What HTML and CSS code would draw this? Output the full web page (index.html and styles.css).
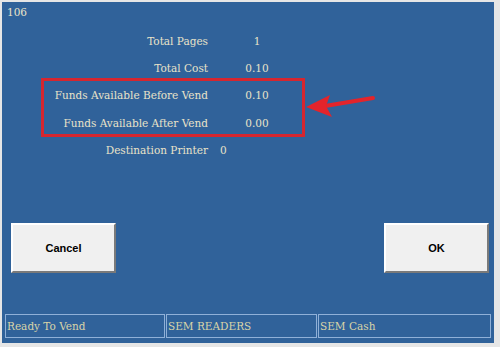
FILE: index.html
```html
<!DOCTYPE html>
<html lang="en">
<head>
    <meta charset="UTF-8">
    <meta name="viewport" content="width=device-width, initial-scale=1.0">
    <title>Vend</title>
    <link rel="stylesheet" href="styles.css">
</head>
<body>

<div class="screen">
    <div class="title">106</div>

    <div class="details">
        <div class="row"><span class="label">Total Pages</span><span class="value">1</span></div>
        <div class="row"><span class="label">Total Cost</span><span class="value">0.10</span></div>
        <div class="row"><span class="label">Funds Available Before Vend</span><span class="value">0.10</span></div>
        <div class="row"><span class="label">Funds Available After Vend</span><span class="value">0.00</span></div>
        <div class="row row-printer"><span class="label">Destination Printer</span><span class="value">0</span></div>

        <div class="highlight"></div>
        <svg class="arrow" width="80" height="30" viewBox="0 0 80 30">
            <path d="M68 6 L20 14" stroke="#e3242b" stroke-width="4" stroke-linecap="round" fill="none"/>
            <path d="M1 15 L25 3 L21 14 L27 25 Z" fill="#e3242b"/>
        </svg>
    </div>

    <div class="actions">
        <button class="btn">Cancel</button>
        <button class="btn">OK</button>
    </div>

    <div class="status">
        <div class="cell">Ready To Vend</div>
        <div class="cell">SEM READERS</div>
        <div class="cell">SEM Cash</div>
    </div>
</div>

</body>
</html>
```

FILE: styles.css
```css
body {
    margin: 0;
    background-color: #e6e6e6;
    font-family: "DejaVu Serif", "Liberation Serif", serif;
}

.screen {
    margin: 2px 6px 4px 2px;
    height: 341px;
    background-color: #30629a;
    color: #e9e3c9;
    display: flex;
    flex-direction: column;
}

.title {
    font-size: 10.5px;
    padding: 4px 0 0 5px;
    height: 17px;
}

.details {
    position: relative;
    padding-top: 4px;
}

.row {
    display: grid;
    grid-template-columns: 206px 54px;
    column-gap: 22px;
    height: 27.3px;
    align-items: center;
    font-size: 10.5px;
}

.label {
    text-align: right;
}

.value {
    text-align: center;
}

.row-printer {
    grid-template-columns: 206px 20px;
    column-gap: 12px;
}

.row-printer .value {
    text-align: left;
}

.highlight {
    position: absolute;
    left: 39px;
    top: 55px;
    width: 258px;
    height: 53px;
    border: 3px solid #d6262f;
}

.arrow {
    position: absolute;
    left: 303px;
    top: 69px;
}

.actions {
    display: flex;
    justify-content: space-between;
    padding: 0 5px 0 9px;
    margin-top: 60px;
}

.btn {
    width: 105px;
    height: 50px;
    background-color: #f0f0f0;
    border: 2px solid;
    border-color: #ffffff #7a7a7a #7a7a7a #ffffff;
    font-family: "Liberation Sans", Arial, sans-serif;
    font-weight: bold;
    font-size: 11px;
    color: #000;
    cursor: pointer;
}

.status {
    display: grid;
    grid-template-columns: 160px 151px 173px;
    column-gap: 1px;
    margin: auto 2px 5px 3px;
}

.cell {
    height: 22px;
    border: 1px solid #8fb0d8;
    display: flex;
    align-items: center;
    padding-left: 1px;
    font-size: 10.5px;
    color: #d9d4a8;
}
```
